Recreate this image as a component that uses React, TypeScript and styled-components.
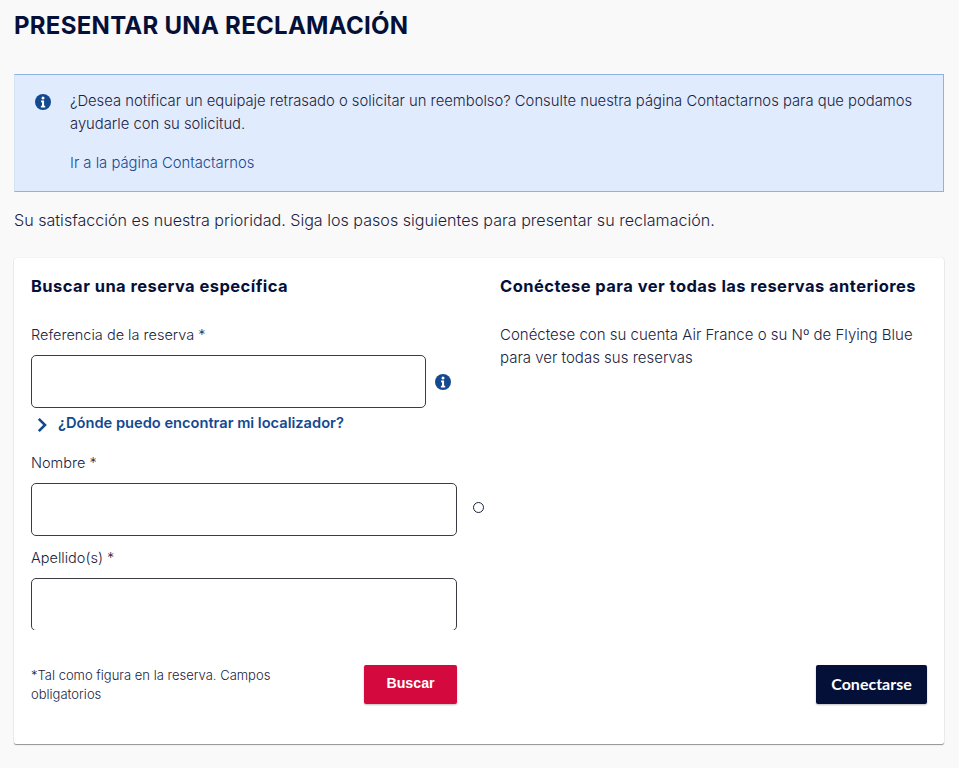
import React from "react";
import styled, { createGlobalStyle } from "styled-components";

const GlobalStyle = createGlobalStyle`
  html, body {
    margin: 0;
    padding: 0;
    background: #f9f9f9;
    overflow: hidden;
  }
  body {
    font-family: "Inter", "Lato", sans-serif;
    color: #051039;
  }
  * {
    box-sizing: border-box;
  }
`;

const Page = styled.main`
  width: 959px;
  height: 768px;
  padding: 0 15px 0 14px;
`;

const Title = styled.h1`
  margin: 0;
  height: 74px;
  padding-top: 12px;
  font-size: 24px;
  letter-spacing: 0.28px;
  line-height: 28px;
  font-weight: 700;
  color: #051039;
`;

const Alert = styled.section`
  display: flex;
  height: 118px;
  padding: 15px 20px 0;
  gap: 19px;
  background: #e0ebfe;
  border: 1px solid #8db2e3;
  border-left-color: #d5e2f6;
`;

const AlertIcon = styled.span`
  display: flex;
  height: 20px;
  padding-top: 4px;
`;

const AlertBody = styled.div`
  flex: 1;
  font-size: 14.8px;
  font-weight: 300;
  line-height: 23px;
  color: #1a2340;
`;

const AlertLink = styled.a`
  display: block;
  margin-top: 16px;
  color: #14498f;
`;

const Intro = styled.p`
  margin: 0;
  height: 66px;
  padding-top: 17px;
  font-size: 16.1px;
  font-weight: 300;
  line-height: 23px;
  color: #1a2340;
`;

const Card = styled.section`
  display: grid;
  grid-template-columns: 426px 427px;
  column-gap: 43px;
  height: 486px;
  padding: 18px 17px 0;
  background: #fff;
  border-radius: 2px;
  box-shadow: 0 0 1px rgba(0, 0, 0, 0.2), 0 1px 1px rgba(0, 0, 0, 0.4);
`;

const Column = styled.div`
  display: flex;
  flex-direction: column;
  height: 428px;
`;

const Heading = styled.h2`
  margin: 0;
  font-size: 16.5px;
  letter-spacing: 0.45px;
  line-height: 20px;
  font-weight: 700;
  color: #051039;
`;

const Fields = styled.div`
  height: 306px;
  margin-top: 28px;
  overflow: hidden;
  flex: none;
  width: 470px;
`;

const Label = styled.label`
  display: block;
  font-size: 14.5px;
  font-weight: 300;
  line-height: 22px;
  color: #1a2340;
`;

const FieldRow = styled.div`
  display: flex;
  align-items: center;
  margin-top: 9px;
`;

const Input = styled.input<{ $width: number }>`
  width: ${(p) => p.$width}px;
  height: 53px;
  flex: none;
  background: #fff;
  border: 1px solid #3c3c42;
  border-radius: 5px;
`;

const InfoSlot = styled.span`
  display: flex;
  margin-left: 9px;
`;

const StatusDot = styled.span`
  width: 11px;
  height: 11px;
  margin: 0 0 5px 16px;
  border: 1px solid #1a2340;
  border-radius: 50%;
`;

const HelpLink = styled.a`
  display: flex;
  align-items: center;
  gap: 10px;
  margin: 4px 0 18px 5px;
  font-size: 14.65px;
  line-height: 22px;
  font-weight: 600;
  color: #14498f;
`;

const FieldGroup = styled.div`
  margin-bottom: 11px;
`;

const Footer = styled.div<{ $end?: boolean }>`
  display: flex;
  align-items: center;
  justify-content: ${(p) => (p.$end ? "flex-end" : "space-between")};
  margin-top: auto;
`;

const Note = styled.p`
  width: 270px;
  margin: 0;
  font-size: 13px;
  font-weight: 300;
  line-height: 19px;
  color: #1a2340;
`;

const Button = styled.button<{ $primary?: boolean }>`
  height: 39px;
  width: ${(p) => (p.$primary ? "93px" : "111px")};
  padding: 0 0 3px;
  border: 0;
  border-radius: 2px;
  font-family: ${(p) => (p.$primary ? '"Liberation Sans"' : '"Lato"')}, sans-serif;
  font-size: ${(p) => (p.$primary ? "14.2px" : "16px")};
  font-weight: 700;
  color: #fff;
  background: ${(p) => (p.$primary ? "#d40a3e" : "#051039")};
  box-shadow: 0 1px 2px rgba(0, 0, 0, 0.25);
`;

const Description = styled.p`
  margin: 27px 0 0;
  font-size: 15px;
  font-weight: 300;
  line-height: 23px;
  color: #1a2340;
`;

const InfoIcon = ({ size }: { size: number }) => (
  <svg width={size} height={size} viewBox="0 0 16 16" aria-hidden="true">
    <circle cx="8" cy="8" r="8" fill="#14498f" />
    <circle cx="8" cy="4.1" r="1.5" fill="#fff" />
    <path d="M6 6.6h3.1v5.2H10.2v1.6H5.9v-1.6h1.1V8.2H6z" fill="#fff" />
  </svg>
);

const ChevronIcon = styled.svg`
  flex: none;
  margin-top: 3px;
`;

const Chevron = () => (
  <ChevronIcon width="12" height="16" viewBox="0 0 12 16" aria-hidden="true">
    <path d="M2.8 1.8 9 8l-6.2 6.2" fill="none" stroke="#14498f" strokeWidth="2.6" />
  </ChevronIcon>
);

export default function App() {
  return (
    <Page>
      <GlobalStyle />
      <Title>PRESENTAR UNA RECLAMACIÓN</Title>
      <Alert>
        <AlertIcon>
          <InfoIcon size={16} />
        </AlertIcon>
        <AlertBody>
          ¿Desea notificar un equipaje retrasado o solicitar un reembolso? Consulte nuestra página
          Contactarnos para que podamos ayudarle con su solicitud.
          <AlertLink>Ir a la página Contactarnos</AlertLink>
        </AlertBody>
      </Alert>
      <Intro>Su satisfacción es nuestra prioridad. Siga los pasos siguientes para presentar su reclamación.</Intro>
      <Card>
        <Column>
          <Heading>Buscar una reserva específica</Heading>
          <Fields>
            <Label>Referencia de la reserva *</Label>
            <FieldRow>
              <Input $width={395} />
              <InfoSlot>
                <InfoIcon size={16} />
              </InfoSlot>
            </FieldRow>
            <HelpLink>
              <Chevron />
              ¿Dónde puedo encontrar mi localizador?
            </HelpLink>
            <FieldGroup>
              <Label>Nombre *</Label>
              <FieldRow>
                <Input $width={426} />
                <StatusDot />
              </FieldRow>
            </FieldGroup>
            <FieldGroup>
              <Label>Apellido(s) *</Label>
              <FieldRow>
                <Input $width={426} />
              </FieldRow>
            </FieldGroup>
          </Fields>
          <Footer>
            <Note>*Tal como figura en la reserva. Campos obligatorios</Note>
            <Button $primary>Buscar</Button>
          </Footer>
        </Column>
        <Column>
          <Heading>Conéctese para ver todas las reservas anteriores</Heading>
          <Description>
            Conéctese con su cuenta Air France o su Nº de Flying Blue para ver todas sus reservas
          </Description>
          <Footer $end>
            <Button>Conectarse</Button>
          </Footer>
        </Column>
      </Card>
    </Page>
  );
}
